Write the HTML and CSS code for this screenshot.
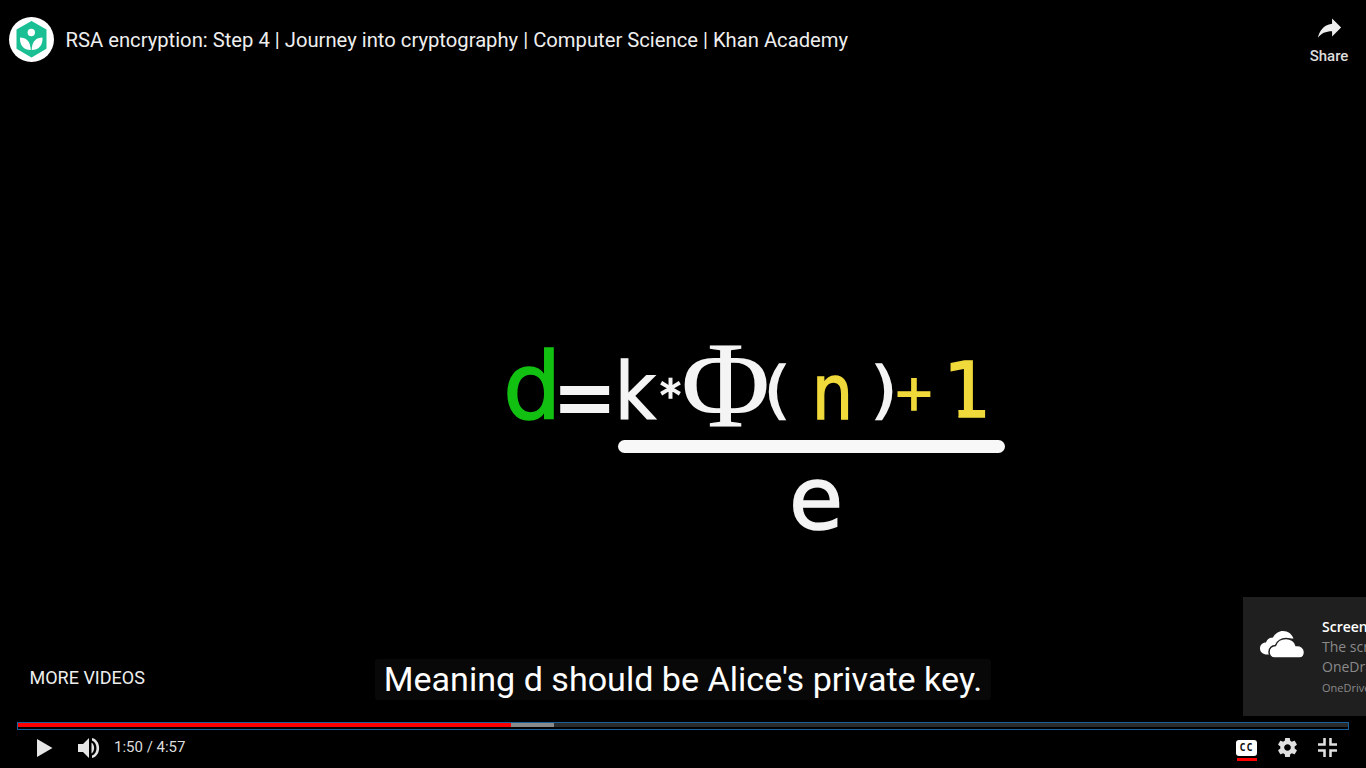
FILE: index.html
```html
<!DOCTYPE html>
<html lang="en">
<head>
    <meta charset="UTF-8">
    <meta name="viewport" content="width=device-width, initial-scale=1.0">
    <title>RSA encryption: Step 4</title>
    <link rel="stylesheet" href="styles.css">
</head>
<body>
    <div class="player">
        <div class="top-bar">
            <svg class="channel-logo" viewBox="0 0 45 45">
                <circle cx="22.500" cy="22.500" r="22.500" fill="#fff"/>
                <path d="M22.500 5 36.500 13.200v18L22.500 39.500 8.500 31.200v-18z" fill="#1abf94" stroke="#1abf94" stroke-width="2" stroke-linejoin="round"/>
                <circle cx="22.300" cy="15.500" r="3.700" fill="#fff"/>
                <path d="M11 20.500c6 0 10.500 3.500 10.800 12.500C15 33 10.500 28.500 11 20.500zM33.500 20.500c-6 0-10.500 3.500-10.800 12.500 6.800 0 11.300-4.500 10.800-12.500z" fill="#fff"/>
            </svg>
            <div class="video-title">RSA encryption: Step 4 | Journey into cryptography | Computer Science | Khan Academy</div>
            <div class="share">
                <svg class="share-icon" viewBox="0 0 24 24"><path d="M14 9V5l7 7-7 7v-4.100c-5 0-8.500 1.600-11 5.100 1-5 4-10 11-11z" fill="#eee"/></svg>
                <span>Share</span>
            </div>
        </div>

        <div class="stage">
            <div class="formula">
                <span class="glyph g-d">d</span>
                <span class="glyph g-eq">=</span>
                <span class="glyph g-k">k</span>
                <span class="glyph g-star">*</span>
                <span class="glyph g-phi">Φ</span>
                <span class="glyph g-lp">(</span>
                <span class="glyph g-n">n</span>
                <span class="glyph g-rp">)</span>
                <span class="glyph g-plus">+</span>
                <span class="glyph g-one">1</span>
                <div class="frac-line"></div>
                <span class="glyph g-e">e</span>
            </div>
            <div class="toast">
                <svg class="toast-icon" viewBox="0 0 45 27">
                    <path d="M7 23.500C3 23.500 0 21 0 17.500 0 14 2.500 11.500 6 11.500 7 8.500 9.500 6.500 13 6.500 15 2.500 19 0 23 0c5 0 9 3 10.500 7.500-1 0-3 0-4 0-5 0-9 2.500-11 6.500-5 0-9 3.500-9 9.500z" fill="#fff"/>
                    <path d="M14.500 27C11 27 9 24 9 21c0-4 3-6.500 6.500-6.500C17 10 21.500 7.500 26 7.500c5 0 9 3 10 7 5-.5 8.500 2.500 8.500 6.500 0 3.500-2 6-5 6z" fill="#fff" stroke="#1f1f1f" stroke-width="1.500"/>
                </svg>
                <div class="toast-text">
                    <div class="toast-head">Screenshot saved</div>
                    <div class="toast-body">The screenshot was added to your</div>
                    <div class="toast-body">OneDrive</div>
                    <div class="toast-src">OneDrive</div>
                </div>
            </div>
        </div>

        <div class="caption-row">
            <div class="more-videos">MORE VIDEOS</div>
            <div class="caption">Meaning d should be Alice's private key.</div>
        </div>

        <div class="progress">
            <div class="progress-track">
                <div class="progress-bar">
                    <div class="progress-played"></div>
                    <div class="progress-buffered"></div>
                </div>
            </div>
        </div>

        <div class="controls">
            <svg class="ctl-play" viewBox="0 0 16 18"><path d="M0 0 15.500 9 0 18z" fill="#e6e6e6"/></svg>
            <svg class="ctl-volume" viewBox="0 0 22 22"><path d="M0 7h5l6-6v20l-6-6H0z" fill="#e6e6e6"/><path d="M13.500 5.500c3.500 2.500 3.500 8.500 0 11z" fill="#e6e6e6"/><path d="M14 1c9.500 2 9.500 18 0 20v-2.400c6-2 6-13.200 0-15.200z" fill="#e6e6e6"/></svg>
            <span class="time">1:50 / 4:57</span>
            <div class="ctl-right">
                <div class="cc">
                    <span class="cc-box">CC</span>
                </div>
                <svg class="ctl-gear" viewBox="0 0 24 24"><path d="M19.430 12.980c.04-.32.07-.64.07-.98s-.03-.66-.07-.98l2.110-1.650c.19-.15.240-.42.120-.64l-2-3.460c-.12-.22-.39-.3-.61-.22l-2.490 1c-.52-.4-1.080-.73-1.690-.98l-.38-2.650C14.460 2.180 14.250 2 14 2h-4c-.25 0-.46.18-.49.420l-.38 2.650c-.61.25-1.170.59-1.690.98l-2.490-1c-.23-.09-.49 0-.61.22l-2 3.460c-.13.22-.07.49.120.64l2.110 1.650c-.04.32-.07.65-.07.98s.03.66.07.98l-2.110 1.650c-.19.15-.24.42-.12.64l2 3.460c.12.22.39.3.61.22l2.490-1c.52.4 1.080.73 1.690.98l.38 2.650c.03.24.24.42.49.42h4c.25 0 .46-.18.49-.42l.38-2.650c.61-.25 1.170-.59 1.690-.98l2.490 1c.23.09.49 0 .61-.22l2-3.460c.12-.22.07-.49-.12-.64l-2.110-1.650zM12 15.500c-1.930 0-3.500-1.570-3.500-3.500s1.570-3.500 3.500-3.500 3.500 1.570 3.500 3.500-1.570 3.500-3.500 3.500z" fill="#e0e0e0"/></svg>
                <svg class="ctl-exit" viewBox="0 0 20 20"><path d="M5.500 0h2.700v8.200H0V5.500h5.500zM11.800 0h2.700v5.500H20v2.700h-8.200zM0 11.800h8.200V20H5.500v-5.500H0zM11.800 11.800H20v2.700h-5.500V20h-2.700z" fill="#e0e0e0"/></svg>
            </div>
        </div>
    </div>
</body>
</html>
```

FILE: styles.css
```css
html, body {
    margin: 0;
    height: 100%;
    background: #000;
    overflow: hidden;
}
.player {
    display: flex;
    flex-direction: column;
    height: 768px;
    font-family: Roboto, "Liberation Sans", sans-serif;
    color: #eee;
    background: #000;
}

/* top bar */
.top-bar {
    display: flex;
    align-items: flex-start;
    height: 80px;
    flex-shrink: 0;
    padding-left: 9px;
}
.channel-logo {
    width: 45px;
    height: 45px;
    margin-top: 17px;
}
.video-title {
    margin-left: 11.500px;
    margin-top: 28px;
    font-size: 20.230px;
    line-height: 24px;
    color: #eee;
    white-space: nowrap;
}
.share {
    margin-left: auto;
    width: 74px;
    display: flex;
    flex-direction: column;
    align-items: center;
    font-size: 15px;
    font-weight: 500;
    color: #ddd;
}
.share-icon {
    width: 31px;
    height: 31px;
    margin-top: 12px;
}
.share span {
    margin-top: 4px;
    line-height: 18px;
}

/* video frame */
.stage {
    flex: 1;
    position: relative;
}
.formula {
    position: absolute;
    left: 0;
    top: -80px;
    filter: blur(0.7px);
}
.glyph {
    position: absolute;
    font-family: "DejaVu Sans", sans-serif;
    line-height: 1;
    color: #f4f4f4;
    -webkit-text-stroke: 1.500px currentColor;
}
.g-d { left: 503px; top: 342px; font-size: 92px; color: #12c012; }
.g-eq { left: 552px; top: 358px; font-size: 78px; font-weight: bold; -webkit-text-stroke: 0; }
.g-k { left: 615px; top: 353px; font-size: 78px; transform: scaleX(.9); transform-origin: left; }
.g-star { left: 660px; top: 375px; font-size: 42px; }
.g-phi { left: 681px; top: 324px; font-size: 122px; font-family: "Liberation Serif", serif; -webkit-text-stroke: 0; }
.g-lp { left: 765px; top: 359px; font-size: 62px; transform: scaleX(1.1); }
.g-n { left: 812px; top: 355px; font-size: 76px; color: #f0d93a; transform: scaleX(.85); transform-origin: left; }
.g-rp { left: 872px; top: 359px; font-size: 62px; transform: scaleX(1.1); }
.g-plus { left: 893px; top: 368px; font-size: 50px; color: #f0d93a; }
.g-one { left: 943px; top: 353px; font-size: 76px; color: #f0d93a; clip-path: polygon(0 0, 100% 0, 100% 100%, 32% 100%, 32% 72%, 0 72%); }
.frac-line {
    position: absolute;
    left: 618px;
    top: 440px;
    width: 387px;
    height: 13px;
    border-radius: 7px;
    background: #f8f8f8;
}
.g-e { left: 789px; top: 455px; font-size: 88px; }

/* onedrive toast */
.toast {
    position: absolute;
    left: 1243px;
    top: 517px;
    width: 123px;
    height: 119px;
    background: #1f1f1f;
    display: flex;
    overflow: hidden;
}
.toast-icon {
    width: 45px;
    height: 27px;
    margin: 34px 0 0 17px;
    flex-shrink: 0;
}
.toast-text {
    margin: 20px 0 0 17px;
    font-family: "Open Sans", sans-serif;
    white-space: nowrap;
}
.toast-head {
    font-size: 14px;
    font-weight: 600;
    line-height: 20px;
    color: #fff;
}
.toast-body {
    font-size: 14px;
    line-height: 20px;
    color: #8a8a8a;
}
.toast-src {
    font-size: 11px;
    line-height: 20px;
    margin-top: 1px;
    color: #8a8a8a;
}

/* captions */
.caption-row {
    display: grid;
    grid-template-columns: 1fr auto 1fr;
    align-items: center;
    height: 41px;
    margin-bottom: 22px;
    flex-shrink: 0;
}
.more-videos {
    padding-left: 29.500px;
    font-size: 18px;
    color: #eee;
    margin-top: -4px;
}
.caption {
    grid-column: 2;
    padding: 0 9px;
    line-height: 41px;
    font-size: 34.100px;
    background: #080808;
    border-radius: 3px;
    color: #fff;
    white-space: nowrap;
}

/* seek bar */
.progress {
    padding: 0 17px;
    flex-shrink: 0;
}
.progress-track {
    padding-bottom: 2px;
    background: #000;
    border: 1px solid #17609e;
}
.progress-bar {
    display: flex;
    height: 4px;
    background: #2c2c2c;
}
.progress-played {
    width: 493px;
    background: #f00;
}
.progress-buffered {
    width: 43px;
    background: #8a8a8a;
}

/* control row */
.controls {
    display: flex;
    align-items: center;
    height: 35px;
    padding: 0 29px 3px 37px;
}
.ctl-play {
    width: 16px;
    height: 18px;
}
.ctl-volume {
    width: 22px;
    height: 22px;
    margin-left: 25px;
}
.time {
    margin-left: 14px;
    margin-bottom: 2px;
    font-size: 15px;
    color: #ddd;
}
.ctl-right {
    margin-left: auto;
    display: flex;
    align-items: center;
}
.cc {
    width: 21px;
    padding-top: 4px;
    margin-bottom: -1px;
}
.cc::after {
    content: "";
    display: block;
    height: 3px;
    margin: 2px 0 0 1px;
    background: #f00;
}
.cc-box {
    display: block;
    height: 16px;
    border-radius: 3px;
    background: #fff;
    color: #111;
    font-family: "DejaVu Sans Mono", monospace;
    font-size: 10px;
    font-weight: bold;
    letter-spacing: 1px;
    line-height: 16px;
    text-align: center;
}
.ctl-gear {
    width: 23px;
    height: 23px;
    margin-left: 19px;
}
.ctl-exit {
    width: 19px;
    height: 19px;
    margin-left: 19px;
    margin-bottom: 1px;
}
```
